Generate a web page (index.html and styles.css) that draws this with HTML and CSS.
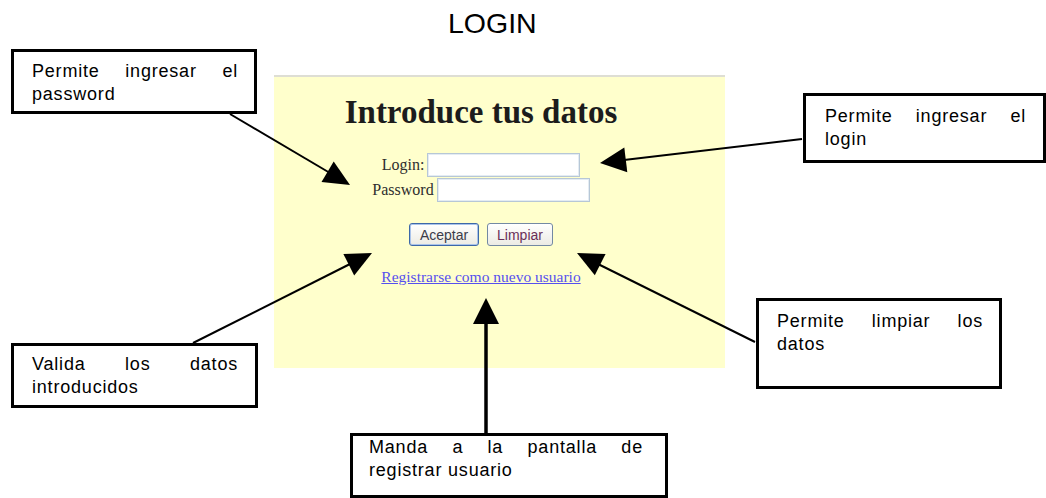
FILE: index.html
```html
<!DOCTYPE html>
<html lang="es">

<head>
    <meta charset="UTF-8">
    <meta name="viewport" content="width=device-width, initial-scale=1.0">
    <title>Login</title>
    <link rel="stylesheet" href="styles.css">
</head>

<body>

    <div class="sheet">
        <h1 class="sheet-title">LOGIN</h1>

        <div class="panel">
            <h2 class="panel-title">Introduce tus datos</h2>
            <form class="login-form" onsubmit="return false">
                <div class="field-row">
                    <label for="login">Login:</label>
                    <input type="text" id="login">
                </div>
                <div class="field-row">
                    <label for="password">Password</label>
                    <input type="password" id="password">
                </div>
                <div class="button-row">
                    <button type="submit" class="btn btn-default">Aceptar</button>
                    <button type="reset" class="btn btn-reset">Limpiar</button>
                </div>
            </form>
            <div class="register">
                <a href="#">Registrarse como nuevo usuario</a>
            </div>
        </div>

        <!-- flechas del diagrama -->
        <svg class="arrows" width="1046" height="498" viewBox="0 0 1046 498">
            <line x1="230" y1="114" x2="330" y2="173" />
            <polygon points="350,185 321.5,182.1 333.7,161.5" />

            <line x1="802" y1="139" x2="624" y2="160" />
            <polygon points="600,163 624.3,147.5 627.3,172.3" />

            <line x1="193" y1="343" x2="350" y2="264" />
            <polygon points="372,253 354.2,275.4 343.4,254" />

            <line x1="755" y1="342" x2="598" y2="264" />
            <polygon points="577,253 605.6,253.9 594.8,275.3" />

            <line class="thick" x1="486" y1="433" x2="486" y2="322" />
            <polygon points="486,298 473,324 499,324" />
        </svg>

        <div class="note note-password">
            <p>Permite ingresar el password</p>
        </div>
        <div class="note note-login">
            <p>Permite ingresar el login</p>
        </div>
        <div class="note note-validate">
            <p>Valida los datos introducidos</p>
        </div>
        <div class="note note-clear">
            <p>Permite limpiar los datos</p>
        </div>
        <div class="note note-register">
            <p>Manda a la pantalla de registrar usuario</p>
        </div>
    </div>

</body>

</html>
```

FILE: styles.css
```css
body {
    margin: 0;
    padding: 0;
    background-color: #ffffff;
    font-family: 'Liberation Sans', Arial, sans-serif;
}

.sheet {
    position: relative;
    width: 1046px;
    height: 498px;
    overflow: hidden;
}

.sheet-title {
    margin: 0;
    padding: 7px 0 0 448px;
    font-size: 28.5px;
    font-weight: normal;
    line-height: 32px;
    color: #000;
}

/* captura de la pantalla de login */
.panel {
    box-sizing: border-box;
    width: 451px;
    height: 293px;
    margin: 36px 0 0 274px;
    padding: 17px 37px 0 0;
    background-color: #ffffcc;
    border-top: 2px solid #deded4;
    font-family: 'Liberation Serif', 'Times New Roman', serif;
}

.panel-title {
    margin: 0;
    font-size: 33px;
    line-height: 36px;
    font-weight: bold;
    text-align: center;
    color: #1c1c1c;
}

.login-form {
    display: flex;
    flex-direction: column;
    align-items: center;
    gap: 1px;
    margin-top: 23px;
}

.field-row {
    display: flex;
    align-items: center;
    gap: 3px;
    height: 24px;
}

.field-row label {
    font-size: 16px;
    color: #2e2e2e;
}

.field-row input {
    box-sizing: border-box;
    width: 153px;
    height: 24px;
    margin: 0;
    border: 1px solid #b7c7d6;
    box-shadow: inset 0 0 0 1px #e4ecf3;
    background: #ffffff;
}

.button-row {
    display: flex;
    gap: 8px;
    margin-top: 20px;
}

.btn {
    box-sizing: border-box;
    height: 23px;
    padding: 0;
    border-radius: 3px;
    background: linear-gradient(#ffffff, #ecebe4);
    font-family: 'Liberation Sans', Arial, sans-serif;
    font-size: 14px;
    cursor: pointer;
}

.btn-default {
    width: 70px;
    border: 1px solid #3d68a8;
    box-shadow: inset 0 0 0 1px #a9c3ea;
    color: #3c3c4a;
}

.btn-reset {
    width: 66px;
    border: 1px solid #7389a3;
    color: #6a2f58;
}

.register {
    margin-top: 22px;
    text-align: center;
    line-height: 18px;
}

.register a {
    font-size: 15.5px;
    color: #5650ee;
}

/* notas */
.arrows {
    position: absolute;
    top: 0;
    left: 0;
    pointer-events: none;
}

.arrows line {
    stroke: #000;
    stroke-width: 2;
}

.arrows line.thick {
    stroke-width: 3.5;
}

.arrows polygon {
    fill: #000;
}

.note {
    position: absolute;
    box-sizing: border-box;
    border: 3px solid #000;
    background: #ffffff;
    font-size: 18px;
    letter-spacing: 0.8px;
    line-height: 23px;
    color: #000;
}

.note p {
    margin: 0;
    text-align: justify;
}

.note-password {
    left: 11px;
    top: 49px;
    width: 246px;
    height: 65px;
    padding: 8px 16px 0 18px;
}

.note-login {
    left: 803px;
    top: 93px;
    width: 243px;
    height: 70px;
    padding: 9px 17px 0 19px;
}

.note-validate {
    left: 11px;
    top: 343px;
    width: 247px;
    height: 65px;
    padding: 7px 17px 0 18px;
}

.note-clear {
    left: 756px;
    top: 298px;
    width: 246px;
    height: 91px;
    padding: 9px 16px 0 18px;
}

.note-register {
    left: 350px;
    top: 433px;
    width: 318px;
    height: 65px;
    padding: 0 22px 0 16px;
}
```
